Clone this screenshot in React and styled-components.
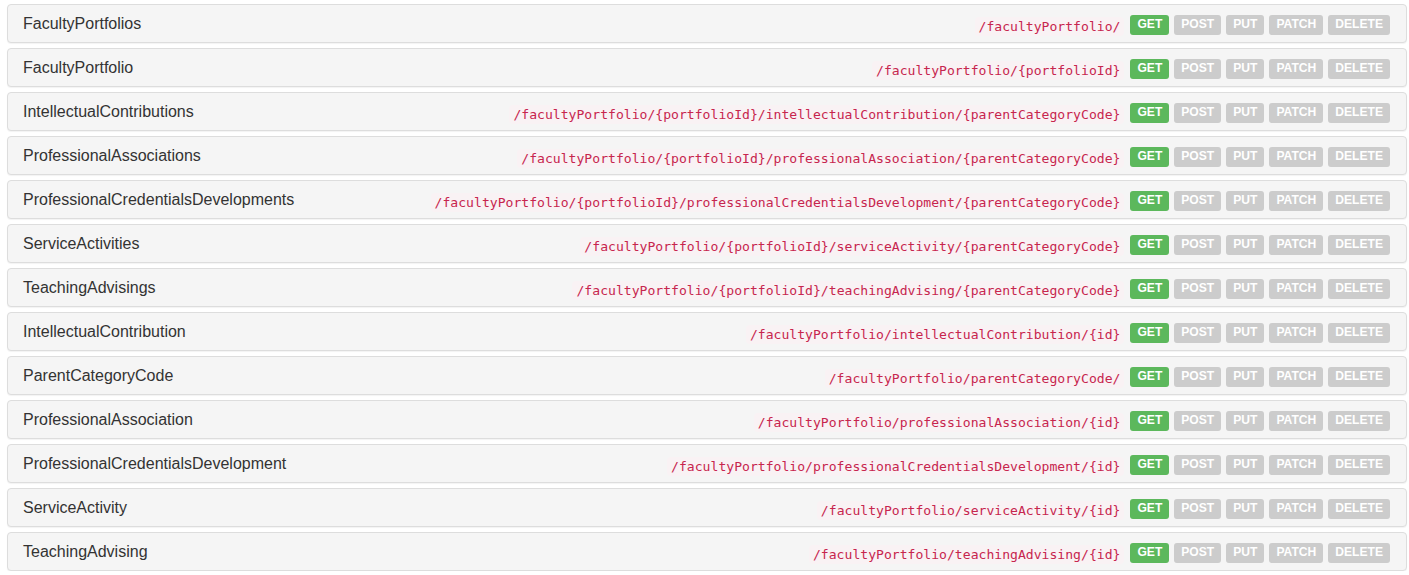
import React from 'react';
import styled, { createGlobalStyle } from 'styled-components';

const GlobalStyle = createGlobalStyle`
  body {
    margin: 0;
    background: #fff;
    font-family: "Liberation Sans", Arial, sans-serif;
    color: #333;
  }
`;

const resources = [
  ['FacultyPortfolios', '/facultyPortfolio/'],
  ['FacultyPortfolio', '/facultyPortfolio/{portfolioId}'],
  ['IntellectualContributions', '/facultyPortfolio/{portfolioId}/intellectualContribution/{parentCategoryCode}'],
  ['ProfessionalAssociations', '/facultyPortfolio/{portfolioId}/professionalAssociation/{parentCategoryCode}'],
  ['ProfessionalCredentialsDevelopments', '/facultyPortfolio/{portfolioId}/professionalCredentialsDevelopment/{parentCategoryCode}'],
  ['ServiceActivities', '/facultyPortfolio/{portfolioId}/serviceActivity/{parentCategoryCode}'],
  ['TeachingAdvisings', '/facultyPortfolio/{portfolioId}/teachingAdvising/{parentCategoryCode}'],
  ['IntellectualContribution', '/facultyPortfolio/intellectualContribution/{id}'],
  ['ParentCategoryCode', '/facultyPortfolio/parentCategoryCode/'],
  ['ProfessionalAssociation', '/facultyPortfolio/professionalAssociation/{id}'],
  ['ProfessionalCredentialsDevelopment', '/facultyPortfolio/professionalCredentialsDevelopment/{id}'],
  ['ServiceActivity', '/facultyPortfolio/serviceActivity/{id}'],
  ['TeachingAdvising', '/facultyPortfolio/teachingAdvising/{id}'],
];

const methods = ['GET', 'POST', 'PUT', 'PATCH', 'DELETE'];

const App = () => {
  return (
    <>
      <GlobalStyle />
      <List>
        {resources.map(([name, path]) => (
          <Panel key={name}>
            <Title>{name}</Title>
            <Right>
              <Path>{path}</Path>
              <Methods>
                {methods.map((m) => (
                  <Method key={m} active={m === 'GET'}>{m}</Method>
                ))}
              </Methods>
            </Right>
          </Panel>
        ))}
      </List>
    </>
  );
};

export default App;

const List = styled.div`
  display: flex;
  flex-direction: column;
  gap: 5px;
  padding: 4px 2px 0 7px;
`;

const Panel = styled.div`
  box-sizing: border-box;
  height: 39px;
  display: flex;
  align-items: center;
  justify-content: space-between;
  padding: 0 16px 0 15px;
  background: #f5f5f5;
  border: 1px solid #ddd;
  border-radius: 4px;
  box-shadow: 0 1px 1px rgba(0, 0, 0, 0.05);
`;

const Title = styled.h3`
  margin: 0;
  font-size: 16px;
  font-weight: normal;
  line-height: 1.1;
  color: #333;
`;

const Right = styled.div`
  display: flex;
  align-items: center;
  gap: 6px;
  padding-top: 2px;
`;

const Path = styled.code`
  font-family: "DejaVu Sans Mono", "Liberation Mono", monospace;
  font-size: 13.1px;
  color: #c7254e;
  background: #f9f2f4;
  padding: 2px 4px;
  border-radius: 4px;
  position: relative;
  top: 2px;
`;

const Methods = styled.div`
  display: flex;
  gap: 5px;
`;

const Method = styled.span`
  font-size: 12.1px;
  font-weight: bold;
  line-height: 1;
  padding: 3px 7px 3px;
  border-radius: 3px;
  color: #fff;
  background: ${(p) => (p.active ? '#5cb85c' : '#ccc')};
  height: 20px;
  box-sizing: border-box;
  display: flex;
  align-items: center;
`;
